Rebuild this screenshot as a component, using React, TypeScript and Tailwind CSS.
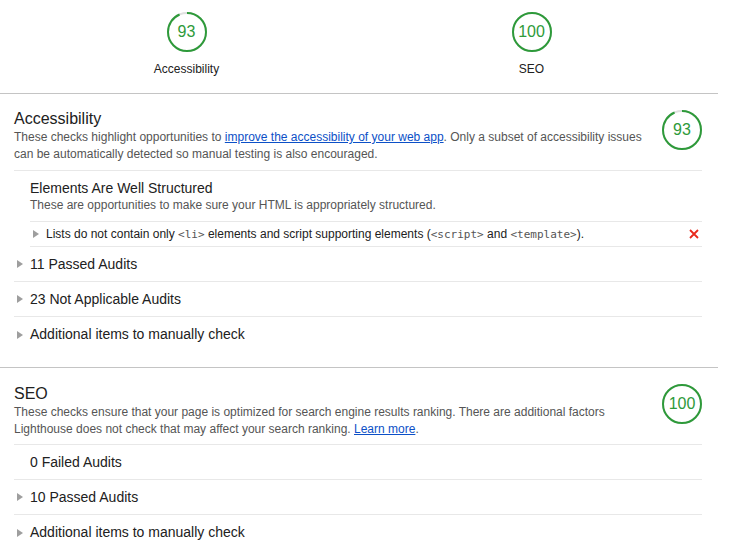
import React from 'react';

const GREEN = '#2e9a3a';

function Gauge({ score }: { score: number }) {
  const r = 19;
  const c = 2 * Math.PI * r;
  return (
    <div className="relative w-[40px] h-[40px] flex-shrink-0">
      <svg width="40" height="40" viewBox="0 0 40 40" className="absolute inset-0 -rotate-90">
        <circle cx="20" cy="20" r={r} fill="none" stroke="#e0e0e0" strokeWidth="2" />
        <circle
          cx="20"
          cy="20"
          r={r}
          fill="none"
          stroke={GREEN}
          strokeWidth="2"
          strokeDasharray={`${(c * score) / 100} ${c}`}
        />
      </svg>
      <div className="absolute inset-0 flex items-center justify-center text-[16px] text-[#2e9a3a]">{score}</div>
    </div>
  );
}

function Caret({ className = '' }: { className?: string }) {
  return <span className={`inline-block w-0 h-0 border-y-[4px] border-y-transparent border-l-[6px] border-l-[#9e9e9e] ${className}`} />;
}

function Row({ label, caret = true, last = false }: { label: string; caret?: boolean; last?: boolean }) {
  return (
    <div className={`h-[35px] flex items-center text-[14px] text-[#212121] ${last ? '' : 'border-b border-[#e8e8e8]'}`}>
      {caret ? <Caret className="ml-[3px] mr-[7px]" /> : <span className="w-[16px]" />}
      <span>{label}</span>
    </div>
  );
}

const mono = 'font-["DejaVu_Sans_Mono",monospace] text-[11px] text-[#555]';

export default function App() {
  return (
    <div className="w-[750px] h-[558px] bg-white overflow-hidden font-['Liberation_Sans',Arial,sans-serif]">
      <div className="w-[718px]">
        {/* SUMMARY */}
        <div className="h-[94px] border-b border-[#c4c4c4] px-[14px] flex justify-around pt-[12px]">
          {[
            { score: 93, label: 'Accessibility' },
            { score: 100, label: 'SEO' },
          ].map((g) => (
            <div key={g.label} className="flex flex-col items-center w-[100px]">
              <Gauge score={g.score} />
              <div className="mt-[9px] text-[12px] leading-[16px] text-[#212121]">{g.label}</div>
            </div>
          ))}
        </div>

        {/* ACCESSIBILITY */}
        <section className="pl-[14px] pr-[16px] pt-[15px] pb-[15px] border-b border-[#c4c4c4]">
          <div className="flex justify-between pb-[7px] border-b border-[#e8e8e8]">
            <div className="pr-[12px]">
              <h2 className="text-[16px] leading-[20px] text-[#212121]">Accessibility</h2>
              <p className="text-[12px] leading-[17px] text-[#555]">
                These checks highlight opportunities to{' '}
                <a className="text-[#0c50c7] underline">improve the accessibility of your web app</a>. Only a subset of accessibility issues can be automatically detected so manual testing is also encouraged.
              </p>
            </div>
            <div className="pt-[1px]">
              <Gauge score={93} />
            </div>
          </div>

          <div className="pl-[16px]">
            <div className="pt-[8px] pb-[7px] border-b border-[#e8e8e8]">
              <div className="text-[14px] leading-[18px] text-[#212121]">Elements Are Well Structured</div>
              <div className="text-[12px] leading-[17px] text-[#555]">These are opportunities to make sure your HTML is appropriately structured.</div>
            </div>
            <div className="h-[25px] flex items-center text-[12px] text-[#212121] border-b border-[#e8e8e8]">
              <Caret className="ml-[3px] mr-[7px]" />
              <span>
                Lists do not contain only <span className={mono}>&lt;li&gt;</span> elements and script supporting elements (
                <span className={mono}>&lt;script&gt;</span> and <span className={mono}>&lt;template&gt;</span>).
              </span>
              <svg width="10" height="10" viewBox="0 0 10 10" className="ml-auto mr-[3px]">
                <path d="M1 1L9 9M9 1L1 9" stroke="#e8291c" strokeWidth="1.8" />
              </svg>
            </div>
          </div>

          <Row label="11 Passed Audits" />
          <Row label="23 Not Applicable Audits" />
          <Row label="Additional items to manually check" last />
        </section>

        {/* SEO */}
        <section className="pl-[14px] pr-[16px] pt-[16px]">
          <div className="flex justify-between pb-[6px] border-b border-[#e8e8e8]">
            <div className="pr-[12px]">
              <h2 className="text-[16px] leading-[20px] text-[#212121]">SEO</h2>
              <p className="text-[12px] leading-[17px] text-[#555]">
                These checks ensure that your page is optimized for search engine results ranking. There are additional factors Lighthouse does not check that may affect your search ranking.{' '}
                <a className="text-[#0c50c7] underline">Learn more</a>.
              </p>
            </div>
            <div className="pt-[0px]">
              <Gauge score={100} />
            </div>
          </div>
          <Row label="0 Failed Audits" caret={false} />
          <Row label="10 Passed Audits" />
          <Row label="Additional items to manually check" last />
        </section>
      </div>
    </div>
  );
}
